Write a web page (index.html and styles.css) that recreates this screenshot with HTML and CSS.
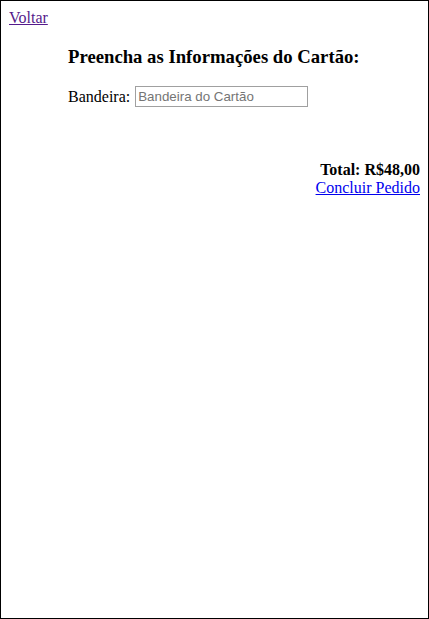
FILE: index.html
```html
<!DOCTYPE html>
<html>
<head>
<meta charset="utf-8">
<link rel="stylesheet" href="styles.css">
</head>
<body>
<a class="back" href="#">Voltar</a>
<div class="form">
  <h3 class="title">Preencha as Informações do Cartão:</h3>
  <div class="field">
    <label for="bandeira">Bandeira:</label>
    <input id="bandeira" class="input" type="text" placeholder="Bandeira do Cartão">
  </div>
</div>
<div class="summary">
  <div class="total">Total: R$48,00</div>
  <a class="finish" href="#">Concluir Pedido</a>
</div>
</body>
</html>
```
FILE: styles.css
```css
html {
  border: 1px solid #000;
  min-height: 100vh;
  box-sizing: border-box;
}
body {
  margin: 8px;
  font-family: "Liberation Serif", "Times New Roman", serif;
  font-size: 16px;
  color: #000;
}
a {
  color: #0000ee;
}
.back {
  color: #551a8b;
}
.form {
  padding-left: 59px;
}
.title {
  font-size: 18.72px;
  font-weight: bold;
  margin: 18.72px 0;
}
.field {
  display: flex;
  align-items: center;
  gap: 5px;
}
.input {
  width: 173px;
  height: 21px;
  box-sizing: border-box;
  border: 1px solid #a0a0a0;
  padding: 1px 2px;
  font-family: "Liberation Sans", Arial, sans-serif;
  font-size: 13.33px;
  margin: 0;
}
.input::placeholder {
  color: #757575;
}
.summary {
  margin-top: 54px;
  text-align: right;
}
.total {
  font-weight: bold;
}
```
